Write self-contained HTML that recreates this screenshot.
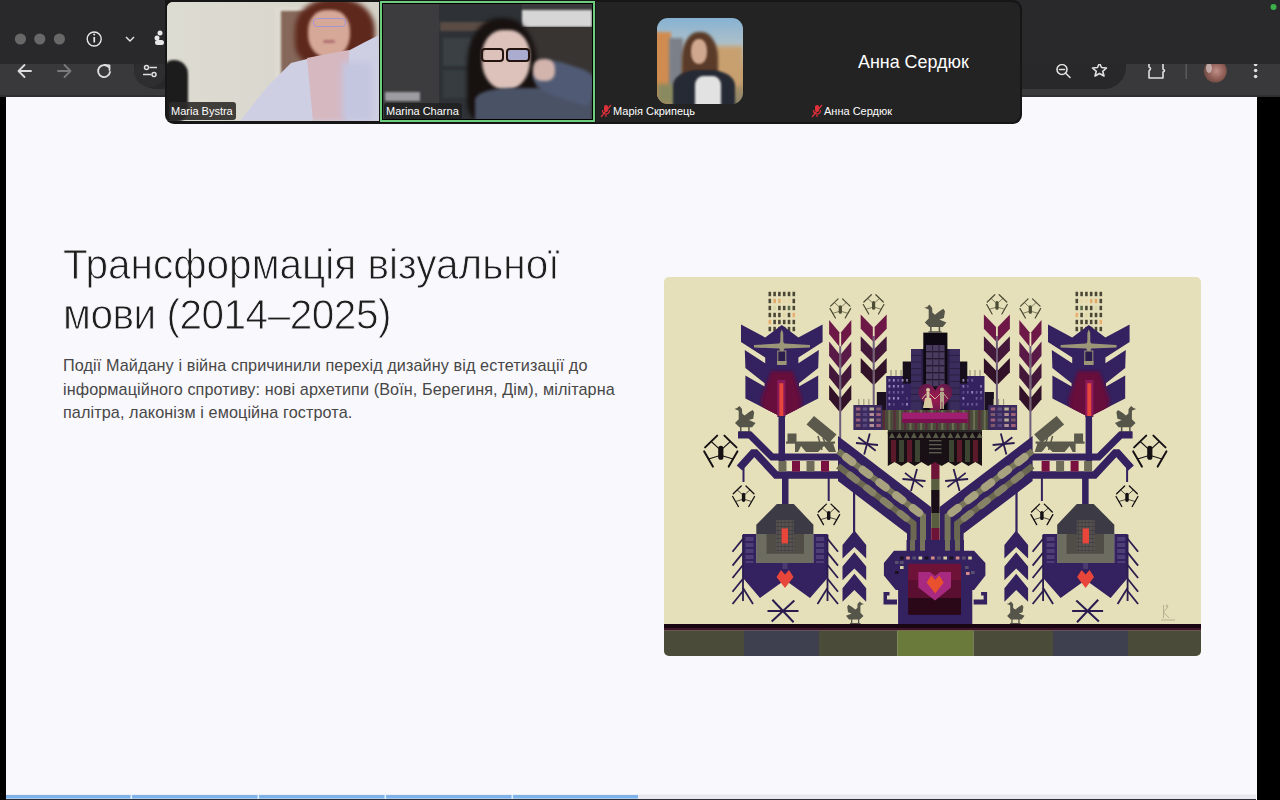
<!DOCTYPE html>
<html><head><meta charset="utf-8">
<style>
*{margin:0;padding:0;box-sizing:border-box}
html,body{width:1280px;height:800px;overflow:hidden;background:#000;font-family:"Liberation Sans",sans-serif}
.abs{position:absolute}
#toolbar{left:0;top:63px;width:1280px;height:34px;background:linear-gradient(180deg,#39393b 0,#39393b 31.5px,#2f2f31 32px);z-index:1}
#omni{left:134px;top:40px;width:992px;height:49px;background:#28282a;border-radius:0 0 22px 22px;z-index:2}
#tabbar{left:0;top:0;width:1280px;height:63.6px;background:#29292b;z-index:3}
#page{left:6px;top:96.6px;width:1251px;height:703px;background:#f9f8fc;z-index:1}
#title{left:63px;top:239.5px;font-size:42px;line-height:50px;color:#1e1e1e;z-index:2;white-space:nowrap;transform:scaleX(0.965);-webkit-text-stroke:0.9px #f9f8fc;transform-origin:0 0}
#body{left:63px;top:354px;font-size:16.2px;line-height:23.5px;color:#474747;z-index:2;white-space:nowrap;letter-spacing:0.1px}
#zoom{left:165px;top:0;width:857px;height:124px;background:#161616;border-radius:0 9px 9px 9px;z-index:10;overflow:hidden}
.tile{position:absolute;overflow:hidden}
.lbl{position:absolute;background:rgba(46,44,42,.9);color:#fff;font-size:11px;line-height:17px;padding:0 3px 0 2px;border-radius:3px;white-space:nowrap}
.blob{position:absolute}
#art{left:664px;top:277px;width:537px;height:379px;z-index:2}
#prog{left:6px;top:795px;width:1250px;height:5px;z-index:3}
</style></head><body>
<div id="toolbar" class="abs"></div>
<div id="omni" class="abs"></div>
<div id="tabbar" class="abs"></div>
<svg class="abs" style="left:0;top:0;z-index:4" width="1280" height="97" viewBox="0 0 1280 97">
  <circle cx="20.4" cy="39" r="5.6" fill="#686868"/>
  <circle cx="39.8" cy="39" r="5.6" fill="#686868"/>
  <circle cx="59.4" cy="39" r="5.6" fill="#686868"/>
  <circle cx="94.2" cy="39" r="7" fill="none" stroke="#e8e8e8" stroke-width="1.4"/>
  <rect x="93.4" y="37" width="1.7" height="5.5" fill="#e8e8e8"/><circle cx="94.2" cy="34.6" r="1" fill="#e8e8e8"/>
  <polyline points="126,37 130,41 134,37" fill="none" stroke="#e8e8e8" stroke-width="1.4"/>
  <circle cx="160" cy="33" r="2.5" fill="#e8e8e8"/><circle cx="157" cy="38" r="2.5" fill="#e8e8e8"/><rect x="155" y="40" width="9" height="5" rx="2.5" fill="#e8e8e8"/>
  <circle cx="1273.5" cy="7" r="3" fill="#3cb04a"/>
</svg>
<svg class="abs" style="left:0;top:63px;z-index:2" width="1280" height="34" viewBox="0 63 1280 34">
  <g fill="none" stroke="#dcdcdc" stroke-width="1.8" stroke-linecap="round" stroke-linejoin="round">
    <polyline points="24.5,65 18.5,71 24.5,77"/><line x1="19" y1="71" x2="31" y2="71"/>
  </g>
  <g fill="none" stroke="#7a7a7a" stroke-width="1.8" stroke-linecap="round" stroke-linejoin="round">
    <polyline points="64.5,65 70.5,71 64.5,77"/><line x1="58" y1="71" x2="70" y2="71"/>
  </g>
  <g fill="none" stroke="#dcdcdc" stroke-width="1.8" stroke-linecap="round">
    <path d="M108.5,67 A6,6 0 1 0 110,72"/><polyline points="104.5,65 109.5,65.5 109.5,70" stroke-linejoin="round"/>
  </g>
  <circle cx="150" cy="71" r="16" fill="#2e2e30"/>
  <g fill="none" stroke="#e0e0e0" stroke-width="1.5"><circle cx="146.5" cy="67.5" r="2"/><line x1="149.5" y1="67.5" x2="157" y2="67.5"/><circle cx="154" cy="74.5" r="2"/><line x1="143" y1="74.5" x2="151" y2="74.5"/></g>
  <g fill="none" stroke="#e0e0e0" stroke-width="1.6" stroke-linecap="round">
    <circle cx="1062" cy="69.5" r="5"/><line x1="1065.5" y1="73" x2="1070" y2="77.5"/><line x1="1059.5" y1="69.5" x2="1064.5" y2="69.5"/>
    <path d="M1099.5,63 L1101.5,67.5 L1106.5,68 L1102.7,71.3 L1104,76 L1099.5,73.5 L1095,76 L1096.3,71.3 L1092.5,68 L1097.5,67.5 Z" stroke-linejoin="round"/>
    <path d="M1149,63 L1149,67 Q1152,68 1149,71 L1149,78 L1163,78 L1163,72 Q1166,71 1163,69 L1163,63" stroke-linejoin="round"/>
  </g>
  <rect x="1185.5" y="64" width="1.5" height="15" fill="#5a5a5c"/>
  <defs><radialGradient id="avg" cx="0.55" cy="0.5" r="0.55"><stop offset="0" stop-color="#c09088"/><stop offset="0.7" stop-color="#8a5a52"/><stop offset="1" stop-color="#6a4a44"/></radialGradient></defs><circle cx="1215.3" cy="71" r="11.5" fill="url(#avg)"/><ellipse cx="1209" cy="68" rx="3" ry="5" fill="#d8c8c8" opacity="0.7"/>
  <circle cx="1255.6" cy="64.5" r="1.8" fill="#e0e0e0"/><circle cx="1255.6" cy="70.5" r="1.8" fill="#e0e0e0"/><circle cx="1255.6" cy="76.5" r="1.8" fill="#e0e0e0"/>
</svg>
<div id="page" class="abs"></div>
<div id="title" class="abs">Трансформація візуальної<br><span style="letter-spacing:-0.5px">мови (2014–2025)</span></div>
<div id="body" class="abs">Події Майдану і війна спричинили перехід дизайну від естетизації до<br>інформаційного спротиву: нові архетипи (Воїн, Берегиня, Дім), мілітарна<br>палітра, лаконізм і емоційна гострота.</div>

<div id="zoom" class="abs">
  <!-- tile 1 -->
  <div class="tile" style="left:2px;top:2px;width:212px;height:119px;background:#d9d7cd;border-radius:6px 0 0 0">
    <div class="blob" style="left:0;top:0;width:212px;height:119px;background:linear-gradient(90deg,#dddcd2,#dad8ce 50%,#d4d1c6)"></div>
    <div class="blob" style="left:108px;top:5px;width:32px;height:84px;background:#dedad2"></div>
    <div class="blob" style="left:114px;top:9px;width:26px;height:80px;background:#86685a;filter:blur(.8px)"></div>
    <div class="blob" style="left:-4px;top:58px;width:25px;height:62px;background:#1c1c1c;border-radius:10px 14px 12px 4px;filter:blur(1px)"></div>
    <div class="blob" style="left:128px;top:-4px;width:80px;height:70px;background:#5e281c;border-radius:45% 45% 35% 35%;filter:blur(2.5px)"></div>
    <div class="blob" style="left:141px;top:8px;width:42px;height:48px;background:#d6a898;border-radius:42% 42% 48% 48%;filter:blur(1.5px)"></div>
    <div class="blob" style="left:146px;top:16px;width:33px;height:9px;border:1.5px solid #a494d4;border-radius:4px;filter:blur(.4px)"></div>
    <div class="blob" style="left:156px;top:38px;width:12px;height:3px;background:#b07070;border-radius:2px;filter:blur(.8px)"></div>
    <div class="blob" style="left:0;top:0;width:212px;height:119px;background:#cfcfe4;clip-path:polygon(73px 119px,100px 85px,124px 61px,144px 56px,181px 49px,198px 40px,212px 33px,212px 119px);filter:blur(1px)"></div>
    <div class="blob" style="left:0;top:0;width:212px;height:119px;background:#d6b8c0;clip-path:polygon(140px 56px,160px 52px,182px 48px,180px 119px,146px 119px);filter:blur(2px)"></div>
    <div class="blob" style="left:175px;top:60px;width:30px;height:59px;background:#c4c6e0;filter:blur(3px)"></div>
    <div class="lbl" style="left:2px;top:100px;height:18px;line-height:18px">Maria Bystra</div>
  </div>
  <!-- tile 2 -->
  <div class="tile" style="left:215px;top:1px;width:215px;height:121px;border:2px solid #6cce7c;background:#000">
    <div class="tile" style="left:1px;top:1px;width:209px;height:115px;background:#3a3a3c">
      <div class="blob" style="left:0;top:0;width:56px;height:115px;background:#3c3b3d"></div>
      <div class="blob" style="left:56px;top:0;width:83px;height:115px;background:#2e3236"></div>
      <div class="blob" style="left:57px;top:18px;width:60px;height:9px;background:#5a4c44;filter:blur(1px)"></div>
      <div class="blob" style="left:60px;top:34px;width:28px;height:28px;background:#3a4044;filter:blur(1px)"></div>
      <div class="blob" style="left:60px;top:66px;width:28px;height:28px;background:#363c40;filter:blur(1px)"></div>
      <div class="blob" style="left:139px;top:6px;width:70px;height:17px;background:#d6d6d6;filter:blur(1px)"></div>
      <div class="blob" style="left:139px;top:23px;width:70px;height:92px;background:#383432"></div>
      <div class="blob" style="left:2px;top:88px;width:35px;height:9px;background:#9c9ca2;filter:blur(.8px)"></div>
      <div class="blob" style="left:84px;top:14px;width:70px;height:104px;background:#171110;border-radius:45% 45% 20% 20%;filter:blur(2px)"></div>
      <div class="blob" style="left:99px;top:26px;width:48px;height:60px;background:#dcc2ba;border-radius:42% 42% 48% 48%;filter:blur(1.5px)"></div>
      <div class="blob" style="left:98px;top:44px;width:23px;height:14px;border:2.2px solid #241410;border-radius:4px"></div>
      <div class="blob" style="left:123px;top:44px;width:24px;height:14px;border:2.2px solid #241410;border-radius:4px;background:rgba(120,150,230,.5)"></div>
      <div class="blob" style="left:92px;top:84px;width:117px;height:40px;background:#4a5266;border-radius:30% 20% 0 0;filter:blur(1.5px)"></div>
      <div class="blob" style="left:150px;top:60px;width:62px;height:34px;background:#505a74;border-radius:40% 30% 10% 40%;transform:rotate(18deg);filter:blur(1.5px)"></div>
      <div class="blob" style="left:150px;top:55px;width:22px;height:22px;background:#d2b4ac;border-radius:40%;filter:blur(1.5px)"></div>
      <div class="lbl" style="left:1px;top:99px;height:17px;line-height:17px;background:rgba(30,30,30,.75)">Marina Charna</div>
    </div>
  </div>
  <!-- tile 3 -->
  <div class="tile" style="left:431px;top:2px;width:213px;height:120px;background:#232323">
    <div class="blob" style="left:61px;top:16px;width:86px;height:86px;border-radius:11px;overflow:hidden;background:linear-gradient(180deg,#86b2d2 0%,#b8c4c8 38%,#c09868 62%,#8a8468 100%)">
      <div class="blob" style="left:-2px;top:14px;width:16px;height:72px;background:#d08c50;filter:blur(1.5px)"></div>
      <div class="blob" style="left:12px;top:20px;width:14px;height:60px;background:#7c8088;filter:blur(1.5px)"></div>
      <div class="blob" style="left:56px;top:28px;width:30px;height:40px;background:#c8a070;filter:blur(2px)"></div>
      <div class="blob" style="left:0;top:66px;width:20px;height:20px;background:#8a8a60;filter:blur(2px)"></div>
      <div class="blob" style="left:25px;top:14px;width:36px;height:58px;background:#5a3a28;border-radius:45% 45% 25% 25%;filter:blur(1.5px)"></div>
      <div class="blob" style="left:34px;top:21px;width:16px;height:25px;background:#d0a890;border-radius:45%;filter:blur(1px)"></div>
      <div class="blob" style="left:16px;top:52px;width:62px;height:38px;background:#262a34;border-radius:40% 40% 0 0;filter:blur(1px)"></div>
      <div class="blob" style="left:38px;top:58px;width:26px;height:30px;background:#e2e2e2;border-radius:30% 30% 0 0;filter:blur(1px)"></div>
    </div>
    <svg class="blob" style="left:4px;top:102px" width="12" height="14" viewBox="0 0 12 14"><rect x="4" y="1" width="4" height="7" rx="2" fill="#e0303a"/><path d="M2.5,6 Q2.5,10 6,10 Q9.5,10 9.5,6" fill="none" stroke="#e0303a" stroke-width="1.2"/><line x1="6" y1="10" x2="6" y2="13" stroke="#e0303a" stroke-width="1.2"/><line x1="1" y1="13" x2="11" y2="1" stroke="#e0303a" stroke-width="1.2"/></svg>
    <div class="lbl" style="left:15px;top:101px;height:17px;line-height:17px;background:transparent">Марія Скрипець</div>
  </div>
  <!-- tile 4 -->
  <div class="tile" style="left:643px;top:2px;width:212px;height:120px;background:#232323;border-radius:0 8px 8px 0">
    <div class="blob" style="left:50px;top:50px;font-size:17.9px;color:#fff;white-space:nowrap">Анна Сердюк</div>
    <svg class="blob" style="left:3px;top:102px" width="12" height="14" viewBox="0 0 12 14"><rect x="4" y="1" width="4" height="7" rx="2" fill="#e0303a"/><path d="M2.5,6 Q2.5,10 6,10 Q9.5,10 9.5,6" fill="none" stroke="#e0303a" stroke-width="1.2"/><line x1="6" y1="10" x2="6" y2="13" stroke="#e0303a" stroke-width="1.2"/><line x1="1" y1="13" x2="11" y2="1" stroke="#e0303a" stroke-width="1.2"/></svg>
    <div class="lbl" style="left:14px;top:101px;height:17px;line-height:17px;background:transparent">Анна Сердюк</div>
  </div>
</div>

<svg id="art" class="abs" viewBox="664 277 537 379">
<defs><clipPath id="artclip"><rect x="664" y="277" width="537" height="379" rx="5"/></clipPath></defs>
<g clip-path="url(#artclip)">
<rect x="664" y="277" width="537" height="379" fill="#e6e0ba"/>
<g id="L"><rect x="768.5" y="291.8" width="2.6" height="4.4" fill="#4a4636" /><rect x="773.3" y="291.8" width="2.6" height="4.4" fill="#4a4636" /><rect x="778.1" y="291.8" width="2.6" height="4.4" fill="#4a4636" /><rect x="782.9" y="291.8" width="2.6" height="4.4" fill="#4a4636" /><rect x="787.7" y="291.8" width="2.6" height="4.4" fill="#4a4636" /><rect x="792.5" y="291.8" width="2.6" height="4.4" fill="#4a4636" /><rect x="768.5" y="298.8" width="2.6" height="4.4" fill="#4a4636" /><rect x="773.3" y="298.8" width="2.6" height="4.4" fill="#e0a868" /><rect x="778.1" y="298.8" width="2.6" height="4.4" fill="#e0b070" /><rect x="782.9" y="298.8" width="2.6" height="4.4" fill="#e6d8a8" /><rect x="787.7" y="298.8" width="2.6" height="4.4" fill="#e6d8a8" /><rect x="792.5" y="298.8" width="2.6" height="4.4" fill="#4a4636" /><rect x="768.5" y="305.8" width="2.6" height="4.4" fill="#4a4636" /><rect x="773.3" y="305.8" width="2.6" height="4.4" fill="#d8d4a8" /><rect x="778.1" y="305.8" width="2.6" height="4.4" fill="#4a4636" /><rect x="782.9" y="305.8" width="2.6" height="4.4" fill="#4a4636" /><rect x="787.7" y="305.8" width="2.6" height="4.4" fill="#5a6a48" /><rect x="792.5" y="305.8" width="2.6" height="4.4" fill="#4a4636" /><rect x="768.5" y="312.8" width="2.6" height="4.4" fill="#4a4636" /><rect x="773.3" y="312.8" width="2.6" height="4.4" fill="#4a4636" /><rect x="778.1" y="312.8" width="2.6" height="4.4" fill="#4a4636" /><rect x="782.9" y="312.8" width="2.6" height="4.4" fill="#e0d8a8" /><rect x="787.7" y="312.8" width="2.6" height="4.4" fill="#4a4636" /><rect x="792.5" y="312.8" width="2.6" height="4.4" fill="#e8b070" /><rect x="768.5" y="319.8" width="2.6" height="4.4" fill="#e8b070" /><rect x="773.3" y="319.8" width="2.6" height="4.4" fill="#4a4636" /><rect x="778.1" y="319.8" width="2.6" height="4.4" fill="#4a4636" /><rect x="782.9" y="319.8" width="2.6" height="4.4" fill="#4a4636" /><rect x="787.7" y="319.8" width="2.6" height="4.4" fill="#4a4636" /><rect x="792.5" y="319.8" width="2.6" height="4.4" fill="#4a4636" /><rect x="768.5" y="326.8" width="2.6" height="4.4" fill="#4a4636" /><rect x="773.3" y="326.8" width="2.6" height="4.4" fill="#4a4636" /><rect x="778.1" y="326.8" width="2.6" height="4.4" fill="#4a4636" /><rect x="782.9" y="326.8" width="2.6" height="4.4" fill="#4a4636" /><rect x="787.7" y="326.8" width="2.6" height="4.4" fill="#4a4636" /><rect x="792.5" y="326.8" width="2.6" height="4.4" fill="#4a4636" /><polygon points="741.0,324.6 765.2,337.5 781.8,325.0 798.4,337.5 822.6,324.6 822.6,341.9 798.4,357.5 798.4,363.2 818.8,350.0 818.2,368.1 799.0,383.2 799.0,386.6 818.2,375.6 818.2,398.5 781.8,417.0 745.4,398.5 745.4,375.6 764.6,386.6 764.6,383.2 745.4,368.1 744.8,350.0 765.2,363.2 765.2,357.5 741.0,341.9" fill="#33225f" /><defs><clipPath id="shclip"><polygon points="741.0,324.6 765.2,337.5 781.8,325.0 798.4,337.5 822.6,324.6 822.6,341.9 798.4,357.5 798.4,363.2 818.8,350.0 818.2,368.1 799.0,383.2 799.0,386.6 818.2,375.6 818.2,398.5 781.8,417.0 745.4,398.5 745.4,375.6 764.6,386.6 764.6,383.2 745.4,368.1 744.8,350.0 765.2,363.2 765.2,357.5 741.0,341.9"/></clipPath><filter id="mblur" x="-0.3" y="-0.3" width="1.6" height="1.6"><feGaussianBlur stdDeviation="1.8"/></filter></defs><g clip-path="url(#shclip)"><polygon points="771.0,371.0 793.0,371.0 802.0,398.0 802.0,420.0 761.0,420.0 761.0,398.0" fill="#5e1040" filter="url(#mblur)"/><polygon points="773.0,373.0 791.0,373.0 798.0,398.0 798.0,420.0 765.0,420.0 765.0,398.0" fill="#680e3c" /></g><rect x="777.2" y="380.0" width="8.2" height="37.0" fill="#8a1a5a" /><rect x="779.4" y="383.2" width="3.9" height="34.0" fill="#e8463a" /><polygon points="754.0,345.0 779.0,343.5 781.8,341.0 784.6,343.5 810.0,345.0 810.0,347.5 784.6,348.5 781.8,352.0 779.0,348.5 754.0,347.5" fill="#9c9678" /><polygon points="780.4,333.0 781.8,329.2 783.2,333.0 783.4,352.0 780.2,352.0" fill="#9c9678" /><rect x="777.8" y="351" width="8" height="11" fill="#2a1c4c" stroke="#9c9678" stroke-width="1"/><rect x="777.0" y="361.0" width="9.6" height="4.0" fill="#9c9678" /><rect x="839.2" y="346.0" width="2.0" height="110.0" fill="#6e5e7a" /><polygon points="829.1,319.9 839.3,332.3 839.3,346.5 829.1,334.1" fill="#6e1848" /><polygon points="851.3,319.9 841.1,332.3 841.1,346.5 851.3,334.1" fill="#6e1848" /><polygon points="829.1,341.6 839.3,354.0 839.3,368.2 829.1,355.8" fill="#5a1a48" /><polygon points="851.3,341.6 841.1,354.0 841.1,368.2 851.3,355.8" fill="#5a1a48" /><polygon points="829.1,363.3 839.3,375.7 839.3,389.9 829.1,377.5" fill="#42173a" /><polygon points="851.3,363.3 841.1,375.7 841.1,389.9 851.3,377.5" fill="#42173a" /><polygon points="829.1,385.0 839.3,397.4 839.3,411.6 829.1,399.2" fill="#321228" /><polygon points="851.3,385.0 841.1,397.4 841.1,411.6 851.3,399.2" fill="#321228" /><rect x="872.7" y="336.0" width="2.0" height="74.0" fill="#6e5e7a" /><polygon points="860.7,314.6 872.8,327.0 872.8,341.2 860.7,328.8" fill="#6e1848" /><polygon points="886.7,314.6 874.6,327.0 874.6,341.2 886.7,328.8" fill="#6e1848" /><polygon points="860.7,336.3 872.8,348.7 872.8,362.9 860.7,350.5" fill="#42173a" /><polygon points="886.7,336.3 874.6,348.7 874.6,362.9 886.7,350.5" fill="#42173a" /><polygon points="860.7,358.0 872.8,370.4 872.8,384.6 860.7,372.2" fill="#321228" /><polygon points="886.7,358.0 874.6,370.4 874.6,384.6 886.7,372.2" fill="#321228" /><g transform="translate(720.8,452.8) scale(1.0)" stroke="#141014" fill="none" stroke-linecap="round"><path d="M-1.5,-4 L-9.6,-11.3 M1.5,-4 L9.6,-11.3 M-1.5,3 L-12.2,6.2 M1.5,3 L12.2,6.2" stroke-width="1.1"/><path d="M-15.7,-5.4 L-3.6,-17.2 M15.7,-5.4 L3.6,-17.2 M-16.6,-1.4 L-7.9,13.8 M16.6,-1.4 L7.9,13.8" stroke-width="2"/><rect x="-2.6" y="-7" width="5.2" height="14" rx="2.6" fill="#141014" stroke="none"/></g><g transform="translate(743.6,497.4) scale(0.66)" stroke="#141014" fill="none" stroke-linecap="round"><path d="M-1.5,-4 L-9.6,-11.3 M1.5,-4 L9.6,-11.3 M-1.5,3 L-12.2,6.2 M1.5,3 L12.2,6.2" stroke-width="1.1"/><path d="M-15.7,-5.4 L-3.6,-17.2 M15.7,-5.4 L3.6,-17.2 M-16.6,-1.4 L-7.9,13.8 M16.6,-1.4 L7.9,13.8" stroke-width="2"/><rect x="-2.6" y="-7" width="5.2" height="14" rx="2.6" fill="#141014" stroke="none"/></g><g transform="translate(828.7,515.5) scale(0.66)" stroke="#141014" fill="none" stroke-linecap="round"><path d="M-1.5,-4 L-9.6,-11.3 M1.5,-4 L9.6,-11.3 M-1.5,3 L-12.2,6.2 M1.5,3 L12.2,6.2" stroke-width="1.1"/><path d="M-15.7,-5.4 L-3.6,-17.2 M15.7,-5.4 L3.6,-17.2 M-16.6,-1.4 L-7.9,13.8 M16.6,-1.4 L7.9,13.8" stroke-width="2"/><rect x="-2.6" y="-7" width="5.2" height="14" rx="2.6" fill="#141014" stroke="none"/></g><g transform="translate(840.3,309.5) scale(0.62)" stroke="#4c4c34" fill="none" stroke-linecap="round"><path d="M-1.5,-4 L-9.6,-11.3 M1.5,-4 L9.6,-11.3 M-1.5,3 L-12.2,6.2 M1.5,3 L12.2,6.2" stroke-width="1.1"/><path d="M-15.7,-5.4 L-3.6,-17.2 M15.7,-5.4 L3.6,-17.2 M-16.6,-1.4 L-7.9,13.8 M16.6,-1.4 L7.9,13.8" stroke-width="2"/><rect x="-2.6" y="-7" width="5.2" height="14" rx="2.6" fill="#4c4c34" stroke="none"/></g><g transform="translate(873.6,305.4) scale(0.62)" stroke="#4c4c34" fill="none" stroke-linecap="round"><path d="M-1.5,-4 L-9.6,-11.3 M1.5,-4 L9.6,-11.3 M-1.5,3 L-12.2,6.2 M1.5,3 L12.2,6.2" stroke-width="1.1"/><path d="M-15.7,-5.4 L-3.6,-17.2 M15.7,-5.4 L3.6,-17.2 M-16.6,-1.4 L-7.9,13.8 M16.6,-1.4 L7.9,13.8" stroke-width="2"/><rect x="-2.6" y="-7" width="5.2" height="14" rx="2.6" fill="#4c4c34" stroke="none"/></g><polygon points="734.4,408.9 737.1,408.1 739.5,405.9 742.0,409.1 742.2,413.5 744.6,415.6 748.9,412.3 752.6,409.9 754.2,412.3 753.2,418.7 748.9,420.0 755.6,422.9 752.1,427.3 739.3,427.3 735.0,423.1 738.7,419.3 738.7,410.7 736.5,409.7" fill="#56554a" /><g transform="translate(745,432.5) scale(1.0,1.0)" fill="#56554a"><rect x="-5" y="-6" width="1.5" height="5.5"/><rect x="3.2" y="-6" width="1.5" height="5.5"/><rect x="-6.5" y="-1.2" width="12.5" height="1.2"/></g><polygon points="864.0,603.9 861.7,603.3 859.7,601.4 857.5,604.1 857.4,607.9 855.3,609.6 851.7,606.8 848.5,604.8 847.2,606.8 848.0,612.3 851.7,613.4 846.0,615.8 849.0,619.6 859.8,619.6 863.5,616.0 860.4,612.8 860.4,605.5 862.2,604.6" fill="#56554a" /><g transform="translate(855,624) scale(-0.85,0.85)" fill="#56554a"><rect x="-5" y="-6" width="1.5" height="5.5"/><rect x="3.2" y="-6" width="1.5" height="5.5"/><rect x="-6.5" y="-1.2" width="12.5" height="1.2"/></g><polyline points="738,435 750,435 772,457 840,457" fill="none" stroke="#33225f" stroke-width="7" stroke-linejoin="miter"/><polyline points="739.5,468 753,453 755.5,453 776,475 840,475" fill="none" stroke="#33225f" stroke-width="7.5" stroke-linejoin="miter"/><rect x="742.5" y="468.0" width="2.0" height="14.0" fill="#33225f" /><rect x="778.5" y="416.0" width="6.5" height="45.0" fill="#33225f" /><rect x="782.0" y="475.0" width="6.5" height="30.0" fill="#33225f" /><rect x="827.7" y="475.0" width="2.0" height="26.0" fill="#33225f" /><rect x="853.0" y="478.0" width="2.2" height="54.0" fill="#33225f" /><rect x="778.5" y="461.0" width="8.0" height="10.5" fill="#6e6c58" /><rect x="792.0" y="461.0" width="8.0" height="10.5" fill="#7a1040" /><rect x="806.5" y="461.0" width="8.0" height="10.5" fill="#6e6c58" /><rect x="821.0" y="461.0" width="8.0" height="10.5" fill="#7a1040" /><rect x="787.5" y="433.5" width="9.0" height="9.0" fill="#5a594c" /><rect x="786.0" y="441.5" width="49.0" height="2.2" fill="#5a594c" /><polygon points="795.0,443.0 833.0,443.0 836.0,452.0 829.0,452.0 824.0,446.0 818.0,452.0 806.0,452.0 801.0,446.0 798.0,452.0 795.0,452.0" fill="#5a594c" /><polygon points="806.5,424.5 814.0,416.0 836.5,434.5 829.0,443.0" fill="#5a594c" /><path d="M818,436 L822,450 M823,438 L828,450" stroke="#5a594c" stroke-width="1.5"/><polygon points="838.0,436.0 931.0,507.0 931.0,551.0 907.0,551.0 907.0,533.6 838.0,481.0" fill="#33225f" /><polyline points="838,466 913.5,523.6 913.5,551" fill="none" stroke="#6a6850" stroke-width="6" stroke-linejoin="miter"/><polyline points="838,451 923,515.9 923,551" fill="none" stroke="#77755a" stroke-width="6" stroke-linejoin="miter"/><polyline points="846,457.1 921,514.3" fill="none" stroke="#a8a27e" stroke-width="8" stroke-dasharray="8 13" stroke-linecap="round"/><polyline points="842,469 910,521" fill="none" stroke="#868266" stroke-width="7" stroke-dasharray="8 13" stroke-dashoffset="-10" stroke-linecap="round"/><line x1="864.2" y1="454.6" x2="869.8" y2="433.4" stroke="#2a1c4e" stroke-width="1.8"/><line x1="856.0" y1="443.0" x2="878.0" y2="445.0" stroke="#2a1c4e" stroke-width="1.8"/><line x1="858.3" y1="437.2" x2="875.7" y2="450.8" stroke="#2a1c4e" stroke-width="1.8"/><line x1="911.0" y1="491.1" x2="917.0" y2="468.9" stroke="#2a1c4e" stroke-width="1.8"/><line x1="902.5" y1="479.0" x2="925.5" y2="481.0" stroke="#2a1c4e" stroke-width="1.8"/><line x1="904.9" y1="472.9" x2="923.1" y2="487.1" stroke="#2a1c4e" stroke-width="1.8"/><line x1="767.5" y1="611.0" x2="798.5" y2="611.0" stroke="#2a1c4e" stroke-width="2"/><line x1="771.7" y1="621.6" x2="794.3" y2="600.4" stroke="#2a1c4e" stroke-width="2"/><line x1="772.4" y1="599.7" x2="793.6" y2="622.3" stroke="#2a1c4e" stroke-width="2"/><polygon points="776.9,504.0 793.8,504.0 813.4,524.7 813.4,534.0 756.3,534.0 756.3,524.7" fill="#3c3a44" /><rect x="756.3" y="534.0" width="57.1" height="29.0" fill="#6d6c60" /><rect x="766.6" y="534.0" width="37.4" height="19.8" fill="#4f4d46" /><rect x="776.0" y="520.0" width="17.8" height="32.0" fill="#5a5852" opacity="0.8"/><rect x="776.0" y="522.0" width="17.8" height="1.0" fill="#3a3840" opacity="0.6"/><rect x="776.0" y="526.0" width="17.8" height="1.0" fill="#3a3840" opacity="0.6"/><rect x="776.0" y="530.0" width="17.8" height="1.0" fill="#3a3840" opacity="0.6"/><rect x="776.0" y="534.0" width="17.8" height="1.0" fill="#3a3840" opacity="0.6"/><rect x="776.0" y="538.0" width="17.8" height="1.0" fill="#3a3840" opacity="0.6"/><rect x="776.0" y="542.0" width="17.8" height="1.0" fill="#3a3840" opacity="0.6"/><rect x="776.0" y="546.0" width="17.8" height="1.0" fill="#3a3840" opacity="0.6"/><rect x="776.0" y="550.0" width="17.8" height="1.0" fill="#3a3840" opacity="0.6"/><rect x="777.5" y="520.0" width="0.8" height="32.0" fill="#3a3840" opacity="0.5"/><rect x="781.1" y="520.0" width="0.8" height="32.0" fill="#3a3840" opacity="0.5"/><rect x="784.7" y="520.0" width="0.8" height="32.0" fill="#3a3840" opacity="0.5"/><rect x="788.3" y="520.0" width="0.8" height="32.0" fill="#3a3840" opacity="0.5"/><rect x="791.9" y="520.0" width="0.8" height="32.0" fill="#3a3840" opacity="0.5"/><rect x="781.6" y="528.4" width="6.4" height="15.0" fill="#e8463a" /><rect x="743.0" y="534.0" width="13.3" height="44.0" fill="#33225f" /><rect x="813.4" y="534.0" width="14.1" height="44.0" fill="#33225f" /><rect x="745.5" y="537.0" width="8.0" height="4.0" fill="#5a4a80" opacity="0.7"/><rect x="816.0" y="537.0" width="8.0" height="4.0" fill="#5a4a80" opacity="0.7"/><rect x="745.5" y="543.0" width="8.0" height="4.0" fill="#5a4a80" opacity="0.7"/><rect x="816.0" y="543.0" width="8.0" height="4.0" fill="#5a4a80" opacity="0.7"/><rect x="745.5" y="549.0" width="8.0" height="4.0" fill="#5a4a80" opacity="0.7"/><rect x="816.0" y="549.0" width="8.0" height="4.0" fill="#5a4a80" opacity="0.7"/><rect x="745.5" y="555.0" width="8.0" height="4.0" fill="#5a4a80" opacity="0.7"/><rect x="816.0" y="555.0" width="8.0" height="4.0" fill="#5a4a80" opacity="0.7"/><rect x="745.5" y="561.0" width="8.0" height="4.0" fill="#5a4a80" opacity="0.7"/><rect x="816.0" y="561.0" width="8.0" height="4.0" fill="#5a4a80" opacity="0.7"/><rect x="745.5" y="567.0" width="8.0" height="4.0" fill="#5a4a80" opacity="0.7"/><rect x="816.0" y="567.0" width="8.0" height="4.0" fill="#5a4a80" opacity="0.7"/><polygon points="743.0,563.0 827.5,563.0 827.5,578.0 810.0,598.0 785.0,580.0 760.0,598.0 743.0,578.0" fill="#33225f" /><rect x="782.5" y="563.0" width="5.0" height="6.0" fill="#4a3a70" /><path transform="translate(785,578.5) scale(1.0)" d="M0,9.5 L-8.5,-1.5 L-4,-8.5 L0,-4 L4,-8.5 L8.5,-1.5 Z" fill="#e8463a"/><line x1="743" y1="534.7" x2="743" y2="601" stroke="#2a1c4e" stroke-width="1.8"/><line x1="743" y1="538.8" x2="732.5" y2="551.8" stroke="#2a1c4e" stroke-width="1.8"/><line x1="743" y1="552.6" x2="732.5" y2="565.6" stroke="#2a1c4e" stroke-width="1.8"/><line x1="743" y1="565" x2="732.5" y2="578" stroke="#2a1c4e" stroke-width="1.8"/><line x1="743" y1="578.7" x2="732.5" y2="591.7" stroke="#2a1c4e" stroke-width="1.8"/><line x1="743" y1="591" x2="732.5" y2="604" stroke="#2a1c4e" stroke-width="1.8"/><line x1="743" y1="588" x2="753" y2="604" stroke="#2a1c4e" stroke-width="1.8"/><line x1="827.5" y1="534.7" x2="827.5" y2="601" stroke="#2a1c4e" stroke-width="1.8"/><line x1="827.5" y1="538.8" x2="838.0" y2="551.8" stroke="#2a1c4e" stroke-width="1.8"/><line x1="827.5" y1="552.6" x2="838.0" y2="565.6" stroke="#2a1c4e" stroke-width="1.8"/><line x1="827.5" y1="565" x2="838.0" y2="578" stroke="#2a1c4e" stroke-width="1.8"/><line x1="827.5" y1="578.7" x2="838.0" y2="591.7" stroke="#2a1c4e" stroke-width="1.8"/><line x1="827.5" y1="591" x2="838.0" y2="604" stroke="#2a1c4e" stroke-width="1.8"/><line x1="827.5" y1="588" x2="817.5" y2="604" stroke="#2a1c4e" stroke-width="1.8"/><polygon points="854.4,530.6 866.2,545.0 866.2,558.6 854.4,546.9 842.5,558.6 842.5,545.0" fill="#33225f" /><polygon points="854.4,552.2 866.2,566.6 866.2,580.2 854.4,568.5 842.5,580.2 842.5,566.6" fill="#33225f" /><polygon points="854.4,573.8 866.2,588.2 866.2,601.8 854.4,590.1 842.5,601.8 842.5,588.2" fill="#33225f" /></g>
<use href="#L" transform="translate(1870.6,0) scale(-1,1)"/>
<polygon points="924.2,307.7 927.0,306.9 929.5,304.6 932.1,307.9 932.4,312.6 934.9,314.8 939.4,311.3 943.3,308.8 945.0,311.3 943.9,318.0 939.4,319.4 946.4,322.4 942.8,327.0 929.3,327.0 924.8,322.6 928.7,318.6 928.7,309.6 926.4,308.6" fill="#56554a" /><g transform="translate(935.3,332.5) scale(1.05,1.05)" fill="#56554a"><rect x="-5" y="-6" width="1.5" height="5.5"/><rect x="3.2" y="-6" width="1.5" height="5.5"/><rect x="-6.5" y="-1.2" width="12.5" height="1.2"/></g><rect x="931.2" y="454.0" width="8.3" height="25.0" fill="#6e1438" /><rect x="931.2" y="479.0" width="8.3" height="11.0" fill="#5a5e40" /><rect x="931.2" y="490.0" width="8.3" height="23.0" fill="#1a0e18" /><rect x="931.2" y="513.0" width="8.3" height="15.0" fill="#5a5e40" /><rect x="931.2" y="528.0" width="8.3" height="23.0" fill="#6e1438" /><rect x="886.2" y="376.0" width="98.3" height="34.0" fill="#33225f" /><rect x="876.8" y="392.0" width="9.4" height="38.0" fill="#1a1020" /><rect x="984.5" y="392.0" width="9.4" height="38.0" fill="#1a1020" /><rect x="902.7" y="361.5" width="8.3" height="22.0" fill="#160e1a" /><rect x="959.8" y="361.5" width="7.5" height="22.0" fill="#160e1a" /><rect x="911.0" y="349.0" width="48.8" height="62.0" fill="#2a1e44" /><rect x="911.0" y="349.0" width="10.3" height="62.0" fill="#3a2c5c" /><rect x="949.6" y="349.0" width="10.2" height="62.0" fill="#3a2c5c" /><rect x="911.0" y="355.0" width="10.3" height="1.0" fill="#2a1e40" /><rect x="949.6" y="355.0" width="10.2" height="1.0" fill="#2a1e40" /><rect x="911.0" y="361.5" width="10.3" height="1.0" fill="#2a1e40" /><rect x="949.6" y="361.5" width="10.2" height="1.0" fill="#2a1e40" /><rect x="911.0" y="368.0" width="10.3" height="1.0" fill="#2a1e40" /><rect x="949.6" y="368.0" width="10.2" height="1.0" fill="#2a1e40" /><rect x="911.0" y="374.5" width="10.3" height="1.0" fill="#2a1e40" /><rect x="949.6" y="374.5" width="10.2" height="1.0" fill="#2a1e40" /><rect x="911.0" y="381.0" width="10.3" height="1.0" fill="#2a1e40" /><rect x="949.6" y="381.0" width="10.2" height="1.0" fill="#2a1e40" /><rect x="911.0" y="387.5" width="10.3" height="1.0" fill="#2a1e40" /><rect x="949.6" y="387.5" width="10.2" height="1.0" fill="#2a1e40" /><rect x="911.0" y="394.0" width="10.3" height="1.0" fill="#2a1e40" /><rect x="949.6" y="394.0" width="10.2" height="1.0" fill="#2a1e40" /><rect x="911.0" y="400.5" width="10.3" height="1.0" fill="#2a1e40" /><rect x="949.6" y="400.5" width="10.2" height="1.0" fill="#2a1e40" /><rect x="923.3" y="332.6" width="24.1" height="78.0" fill="#0e0812" /><rect x="926.0" y="345.0" width="18.6" height="42.0" fill="#4a3c5e" /><rect x="926.0" y="351.0" width="18.6" height="1.3" fill="#241830" /><rect x="926.0" y="358.0" width="18.6" height="1.3" fill="#241830" /><rect x="926.0" y="365.0" width="18.6" height="1.3" fill="#241830" /><rect x="926.0" y="372.0" width="18.6" height="1.3" fill="#241830" /><rect x="926.0" y="379.0" width="18.6" height="1.3" fill="#241830" /><rect x="926.0" y="386.0" width="18.6" height="1.3" fill="#241830" /><rect x="932.0" y="345.0" width="1.2" height="42.0" fill="#2e2240" /><rect x="938.4" y="345.0" width="1.2" height="42.0" fill="#2e2240" /><rect x="890.5" y="370.0" width="1.0" height="6.0" fill="#8a8470" /><rect x="895.5" y="370.0" width="1.0" height="6.0" fill="#8a8470" /><rect x="900.5" y="370.0" width="1.0" height="6.0" fill="#8a8470" /><rect x="969.5" y="370.0" width="1.0" height="6.0" fill="#8a8470" /><rect x="974.5" y="370.0" width="1.0" height="6.0" fill="#8a8470" /><rect x="979.5" y="370.0" width="1.0" height="6.0" fill="#8a8470" /><rect x="888.5" y="379.0" width="1.8" height="2.6" fill="#8a78b0" /><rect x="892.9" y="379.0" width="1.8" height="2.6" fill="#9a88c0" /><rect x="897.3" y="379.0" width="1.8" height="2.6" fill="#6a5a98" /><rect x="901.7" y="379.0" width="1.8" height="2.6" fill="#9a88c0" /><rect x="906.1" y="379.0" width="1.8" height="2.6" fill="#8a78b0" /><rect x="888.5" y="385.0" width="1.8" height="2.6" fill="#9a88c0" /><rect x="892.9" y="385.0" width="1.8" height="2.6" fill="#9a88c0" /><rect x="897.3" y="385.0" width="1.8" height="2.6" fill="#8a78b0" /><rect x="901.7" y="385.0" width="1.8" height="2.6" fill="#8a78b0" /><rect x="888.5" y="391.0" width="1.8" height="2.6" fill="#6a5a98" /><rect x="892.9" y="391.0" width="1.8" height="2.6" fill="#6a5a98" /><rect x="897.3" y="391.0" width="1.8" height="2.6" fill="#6a5a98" /><rect x="901.7" y="391.0" width="1.8" height="2.6" fill="#6a5a98" /><rect x="888.5" y="397.0" width="1.8" height="2.6" fill="#9a88c0" /><rect x="892.9" y="397.0" width="1.8" height="2.6" fill="#9a88c0" /><rect x="897.3" y="397.0" width="1.8" height="2.6" fill="#9a88c0" /><rect x="906.1" y="397.0" width="1.8" height="2.6" fill="#5a4a80" /><rect x="888.5" y="403.0" width="1.8" height="2.6" fill="#8a78b0" /><rect x="892.9" y="403.0" width="1.8" height="2.6" fill="#5a4a80" /><rect x="901.7" y="403.0" width="1.8" height="2.6" fill="#5a4a80" /><rect x="906.1" y="403.0" width="1.8" height="2.6" fill="#9a88c0" /><rect x="962.5" y="379.0" width="1.8" height="2.6" fill="#9a88c0" /><rect x="966.9" y="379.0" width="1.8" height="2.6" fill="#5a4a80" /><rect x="971.3" y="379.0" width="1.8" height="2.6" fill="#6a5a98" /><rect x="962.5" y="385.0" width="1.8" height="2.6" fill="#8a78b0" /><rect x="966.9" y="385.0" width="1.8" height="2.6" fill="#5a4a80" /><rect x="980.1" y="385.0" width="1.8" height="2.6" fill="#8a78b0" /><rect x="962.5" y="391.0" width="1.8" height="2.6" fill="#5a4a80" /><rect x="966.9" y="391.0" width="1.8" height="2.6" fill="#6a5a98" /><rect x="971.3" y="391.0" width="1.8" height="2.6" fill="#9a88c0" /><rect x="975.7" y="391.0" width="1.8" height="2.6" fill="#6a5a98" /><rect x="980.1" y="391.0" width="1.8" height="2.6" fill="#8a78b0" /><rect x="962.5" y="397.0" width="1.8" height="2.6" fill="#9a88c0" /><rect x="975.7" y="397.0" width="1.8" height="2.6" fill="#6a5a98" /><rect x="980.1" y="397.0" width="1.8" height="2.6" fill="#5a4a80" /><rect x="962.5" y="403.0" width="1.8" height="2.6" fill="#5a4a80" /><rect x="966.9" y="403.0" width="1.8" height="2.6" fill="#6a5a98" /><rect x="971.3" y="403.0" width="1.8" height="2.6" fill="#6a5a98" /><rect x="975.7" y="403.0" width="1.8" height="2.6" fill="#6a5a98" /><defs><radialGradient id="glow" cx="0.5" cy="0.45" r="0.6"><stop offset="0" stop-color="#a01a50"/><stop offset="1" stop-color="#5a1a4a"/></radialGradient></defs><path transform="translate(935.3,398) scale(1.9)" d="M0,9 L-8,0 C-10,-3 -9,-7 -5,-7.5 C-2.5,-7.5 -1,-6 0,-4 C1,-6 2.5,-7.5 5,-7.5 C9,-7 10,-3 8,0 Z" fill="url(#glow)"/><g fill="#d8c8a0"><circle cx="928" cy="390" r="2"/><rect x="926.5" y="392" width="3" height="6"/><polygon points="925,398 931,398 933,408 923,408"/><line x1="926" y1="394" x2="922" y2="399" stroke="#d8c8a0" stroke-width="1"/><line x1="930" y1="394" x2="935" y2="399" stroke="#d8c8a0" stroke-width="1"/></g><g fill="#b4a48a"><circle cx="942" cy="389.5" r="2"/><rect x="940" y="392" width="4" height="10"/><rect x="940" y="402" width="1.6" height="7"/><rect x="942.4" y="402" width="1.6" height="7"/><line x1="940" y1="394" x2="935" y2="399" stroke="#b4a48a" stroke-width="1"/><line x1="944" y1="394" x2="948" y2="399" stroke="#b4a48a" stroke-width="1"/></g><rect x="853.4" y="405.0" width="28.9" height="25.0" fill="#3a2a5e" /><rect x="855.9" y="407.5" width="4.5" height="3.0" fill="#b06880" opacity="0.85"/><rect x="862.7" y="407.5" width="4.5" height="3.0" fill="#6a5a88" opacity="0.85"/><rect x="869.5" y="407.5" width="4.5" height="3.0" fill="#d0c8a0" opacity="0.85"/><rect x="876.3" y="407.5" width="4.5" height="3.0" fill="#8a6070" opacity="0.85"/><rect x="855.9" y="413.0" width="4.5" height="3.0" fill="#8a6070" opacity="0.85"/><rect x="862.7" y="413.0" width="4.5" height="3.0" fill="#5a4a80" opacity="0.85"/><rect x="869.5" y="413.0" width="4.5" height="3.0" fill="#c8a0a0" opacity="0.85"/><rect x="876.3" y="413.0" width="4.5" height="3.0" fill="#b06880" opacity="0.85"/><rect x="855.9" y="418.5" width="4.5" height="3.0" fill="#b06880" opacity="0.85"/><rect x="862.7" y="418.5" width="4.5" height="3.0" fill="#6a5a88" opacity="0.85"/><rect x="869.5" y="418.5" width="4.5" height="3.0" fill="#d0c8a0" opacity="0.85"/><rect x="876.3" y="418.5" width="4.5" height="3.0" fill="#8a6070" opacity="0.85"/><rect x="855.9" y="424.0" width="4.5" height="3.0" fill="#8a6070" opacity="0.85"/><rect x="862.7" y="424.0" width="4.5" height="3.0" fill="#5a4a80" opacity="0.85"/><rect x="869.5" y="424.0" width="4.5" height="3.0" fill="#c8a0a0" opacity="0.85"/><rect x="876.3" y="424.0" width="4.5" height="3.0" fill="#b06880" opacity="0.85"/><rect x="858.4" y="399.0" width="0.9" height="6.0" fill="#8a8470" /><rect x="863.4" y="399.0" width="0.9" height="6.0" fill="#8a8470" /><rect x="868.4" y="399.0" width="0.9" height="6.0" fill="#8a8470" /><rect x="988.2" y="405.0" width="28.9" height="25.0" fill="#3a2a5e" /><rect x="990.7" y="407.5" width="4.5" height="3.0" fill="#b06880" opacity="0.85"/><rect x="997.5" y="407.5" width="4.5" height="3.0" fill="#6a5a88" opacity="0.85"/><rect x="1004.3" y="407.5" width="4.5" height="3.0" fill="#d0c8a0" opacity="0.85"/><rect x="1011.1" y="407.5" width="4.5" height="3.0" fill="#8a6070" opacity="0.85"/><rect x="990.7" y="413.0" width="4.5" height="3.0" fill="#8a6070" opacity="0.85"/><rect x="997.5" y="413.0" width="4.5" height="3.0" fill="#5a4a80" opacity="0.85"/><rect x="1004.3" y="413.0" width="4.5" height="3.0" fill="#c8a0a0" opacity="0.85"/><rect x="1011.1" y="413.0" width="4.5" height="3.0" fill="#b06880" opacity="0.85"/><rect x="990.7" y="418.5" width="4.5" height="3.0" fill="#b06880" opacity="0.85"/><rect x="997.5" y="418.5" width="4.5" height="3.0" fill="#6a5a88" opacity="0.85"/><rect x="1004.3" y="418.5" width="4.5" height="3.0" fill="#d0c8a0" opacity="0.85"/><rect x="1011.1" y="418.5" width="4.5" height="3.0" fill="#8a6070" opacity="0.85"/><rect x="990.7" y="424.0" width="4.5" height="3.0" fill="#8a6070" opacity="0.85"/><rect x="997.5" y="424.0" width="4.5" height="3.0" fill="#5a4a80" opacity="0.85"/><rect x="1004.3" y="424.0" width="4.5" height="3.0" fill="#c8a0a0" opacity="0.85"/><rect x="1011.1" y="424.0" width="4.5" height="3.0" fill="#b06880" opacity="0.85"/><rect x="993.2" y="399.0" width="0.9" height="6.0" fill="#8a8470" /><rect x="998.2" y="399.0" width="0.9" height="6.0" fill="#8a8470" /><rect x="1003.2" y="399.0" width="0.9" height="6.0" fill="#8a8470" /><rect x="882.3" y="410.0" width="105.9" height="20.0" fill="#4a4a3a" /><rect x="883.0" y="410.0" width="2.0" height="20.0" fill="#5a2a3a" /><rect x="888.3" y="410.0" width="2.0" height="20.0" fill="#6a7050" /><rect x="893.6" y="410.0" width="2.0" height="20.0" fill="#5a2a3a" /><rect x="898.9" y="410.0" width="2.0" height="20.0" fill="#6a7050" /><rect x="904.2" y="410.0" width="2.0" height="20.0" fill="#5a2a3a" /><rect x="909.5" y="410.0" width="2.0" height="20.0" fill="#6a7050" /><rect x="914.8" y="410.0" width="2.0" height="20.0" fill="#5a2a3a" /><rect x="920.1" y="410.0" width="2.0" height="20.0" fill="#6a7050" /><rect x="925.4" y="410.0" width="2.0" height="20.0" fill="#5a2a3a" /><rect x="930.7" y="410.0" width="2.0" height="20.0" fill="#6a7050" /><rect x="936.0" y="410.0" width="2.0" height="20.0" fill="#5a2a3a" /><rect x="941.3" y="410.0" width="2.0" height="20.0" fill="#6a7050" /><rect x="946.6" y="410.0" width="2.0" height="20.0" fill="#5a2a3a" /><rect x="951.9" y="410.0" width="2.0" height="20.0" fill="#6a7050" /><rect x="957.2" y="410.0" width="2.0" height="20.0" fill="#5a2a3a" /><rect x="962.5" y="410.0" width="2.0" height="20.0" fill="#6a7050" /><rect x="967.8" y="410.0" width="2.0" height="20.0" fill="#5a2a3a" /><rect x="973.1" y="410.0" width="2.0" height="20.0" fill="#6a7050" /><rect x="978.4" y="410.0" width="2.0" height="20.0" fill="#5a2a3a" /><rect x="983.7" y="410.0" width="2.0" height="20.0" fill="#6a7050" /><polygon points="902.3,412.6 967.6,412.6 967.6,423.0 935.0,423.0 902.3,423.0" fill="#a01e70" /><rect x="902.3" y="419.0" width="65.3" height="4.0" fill="#7a1050" /><rect x="887.8" y="430.0" width="94.2" height="4.0" fill="#2a2a28" /><polygon points="887.8,432.0 982.0,432.0 982.0,466.0 975.3,462.0 968.5,466.0 961.8,462.0 955.1,466.0 948.4,462.0 941.6,466.0 934.9,462.0 928.2,466.0 921.4,462.0 914.7,466.0 908.0,462.0 901.3,466.0 894.5,462.0 887.8,466.0" fill="#181014" /><rect x="891.0" y="440.0" width="5.0" height="22.0" fill="#5a1a2a" /><rect x="899.0" y="440.0" width="5.0" height="22.0" fill="#3e4432" /><rect x="907.0" y="440.0" width="5.0" height="22.0" fill="#5a1a2a" /><rect x="915.0" y="440.0" width="5.0" height="22.0" fill="#3e4432" /><rect x="949.0" y="440.0" width="5.0" height="22.0" fill="#3e4432" /><rect x="957.0" y="440.0" width="5.0" height="22.0" fill="#5a1a2a" /><rect x="965.0" y="440.0" width="5.0" height="22.0" fill="#3e4432" /><rect x="973.0" y="440.0" width="5.0" height="22.0" fill="#5a1a2a" /><polygon points="889.0,438.0 892.0,432.5 895.0,438.0" fill="#5a5a48" /><polygon points="896.3,438.0 899.3,432.5 902.3,438.0" fill="#5a5a48" /><polygon points="903.6,438.0 906.6,432.5 909.6,438.0" fill="#5a5a48" /><polygon points="910.9,438.0 913.9,432.5 916.9,438.0" fill="#5a5a48" /><polygon points="918.2,438.0 921.2,432.5 924.2,438.0" fill="#5a5a48" /><polygon points="925.5,438.0 928.5,432.5 931.5,438.0" fill="#5a5a48" /><polygon points="932.8,438.0 935.8,432.5 938.8,438.0" fill="#5a5a48" /><polygon points="940.1,438.0 943.1,432.5 946.1,438.0" fill="#5a5a48" /><polygon points="947.4,438.0 950.4,432.5 953.4,438.0" fill="#5a5a48" /><polygon points="954.7,438.0 957.7,432.5 960.7,438.0" fill="#5a5a48" /><polygon points="962.0,438.0 965.0,432.5 968.0,438.0" fill="#5a5a48" /><polygon points="969.3,438.0 972.3,432.5 975.3,438.0" fill="#5a5a48" /><polygon points="976.6,438.0 979.6,432.5 982.6,438.0" fill="#5a5a48" /><rect x="927.7" y="438.0" width="15.1" height="17.0" fill="#181014" /><rect x="929.0" y="440.0" width="12.5" height="1.4" fill="#5a5a50" /><rect x="929.0" y="444.0" width="12.5" height="1.4" fill="#5a5a50" /><rect x="929.0" y="448.0" width="12.5" height="1.4" fill="#5a5a50" /><rect x="929.0" y="452.0" width="12.5" height="1.4" fill="#5a5a50" /><rect x="906.5" y="540.0" width="57.5" height="11.0" fill="#33225f" /><rect x="910.0" y="540.0" width="5.0" height="11.0" fill="#6f6d58" /><rect x="920.0" y="540.0" width="5.0" height="11.0" fill="#77765c" /><rect x="945.0" y="540.0" width="5.0" height="11.0" fill="#77765c" /><rect x="955.0" y="540.0" width="5.0" height="11.0" fill="#6f6d58" /><polygon points="894.0,550.7 974.1,550.7 985.4,563.1 985.4,575.6 974.1,589.9 972.3,589.9 972.3,624.0 898.1,624.0 898.1,589.9 895.8,589.9 883.9,575.6 883.9,563.1" fill="#33225f" /><path d="M883.5,592 h6 v3.5 h-2.5 v4 h10 v5 h-13.5 Z" fill="#33225f"/><path d="M987.0999999999999,592 h-6 v3.5 h2.5 v4 h-10 v5 h13.5 Z" fill="#33225f"/><rect x="908.2" y="563.7" width="52.8" height="34.0" fill="#6e1238" /><rect x="908.2" y="580.0" width="52.8" height="18.0" fill="#5a0e30" /><rect x="908.2" y="598.0" width="52.8" height="16.8" fill="#2a0818" /><polygon points="918.3,572.0 930.0,572.0 935.0,576.0 940.0,572.0 951.0,572.0 951.0,587.5 935.0,600.5 918.3,587.5" fill="#a82a80" /><path transform="translate(935.2,584) scale(1.0)" d="M0,9.5 L-8.5,-1.5 L-4,-8.5 L0,-4 L4,-8.5 L8.5,-1.5 Z" fill="#e8502e"/><rect x="900.0" y="556.5" width="3.6" height="3.0" fill="#1a1020" /><rect x="906.2" y="556.5" width="3.6" height="3.0" fill="#d88a8a" /><rect x="912.4" y="556.5" width="3.6" height="3.0" fill="#5a5070" /><rect x="918.6" y="556.5" width="3.6" height="3.0" fill="#d8d0a0" /><rect x="924.8" y="556.5" width="3.6" height="3.0" fill="#1a1020" /><rect x="931.0" y="556.5" width="3.6" height="3.0" fill="#d88a8a" /><rect x="937.2" y="556.5" width="3.6" height="3.0" fill="#5a5070" /><rect x="943.4" y="556.5" width="3.6" height="3.0" fill="#d8d0a0" /><rect x="949.6" y="556.5" width="3.6" height="3.0" fill="#1a1020" /><rect x="955.8" y="556.5" width="3.6" height="3.0" fill="#d88a8a" /><rect x="962.0" y="556.5" width="3.6" height="3.0" fill="#5a5070" /><rect x="968.2" y="556.5" width="3.6" height="3.0" fill="#d8d0a0" /><rect x="895.0" y="561.0" width="3.6" height="3.0" fill="#5a5070" /><rect x="900.0" y="561.0" width="3.6" height="3.0" fill="#5a5070" /><rect x="900.0" y="566.0" width="3.6" height="3.0" fill="#d8d0a0" /><rect x="895.0" y="571.0" width="3.6" height="3.0" fill="#1a1020" /><rect x="965.0" y="566.0" width="3.6" height="3.0" fill="#5a5070" /><rect x="966.0" y="572.0" width="3.6" height="3.0" fill="#d88a8a" /><rect x="971.0" y="571.0" width="3.6" height="3.0" fill="#5a5070" />
<rect x="664.0" y="624.0" width="537.0" height="4.0" fill="#1a0612" /><rect x="664.0" y="628.0" width="537.0" height="2.6" fill="#3e1428" /><rect x="664.0" y="630.5" width="80.0" height="26.0" fill="#4a4b38" /><rect x="744.0" y="630.5" width="75.0" height="26.0" fill="#3e4050" /><rect x="819.0" y="630.5" width="78.5" height="26.0" fill="#4a4b38" /><rect x="897.5" y="630.5" width="76.0" height="26.0" fill="#6a7a3a" /><rect x="973.5" y="630.5" width="79.5" height="26.0" fill="#4a4b38" /><rect x="1053.0" y="630.5" width="75.0" height="26.0" fill="#3e4050" /><rect x="1128.0" y="630.5" width="73.0" height="26.0" fill="#4a4b38" />
<g fill="none" stroke="#b8b090" stroke-width="1"><line x1="1163.5" y1="605" x2="1163.5" y2="618"/><line x1="1163.5" y1="612" x2="1169" y2="618"/><line x1="1163.5" y1="612" x2="1168" y2="607"/><circle cx="1167" cy="606" r="0.9"/><line x1="1161" y1="620" x2="1175" y2="620"/></g>
</g>
</svg>
<svg id="prog" class="abs" viewBox="6 794 1250 6" style="top:794px;height:6px">
  <rect x="6" y="794" width="1250" height="6" fill="#f0eff4"/>
  <rect x="6" y="795" width="632" height="3.6" fill="#7db2ea"/>
  <rect x="638" y="795" width="618" height="4" fill="#e8e8ee"/>
  <rect x="130.5" y="794" width="1.6" height="5" fill="#dff0ff"/>
  <rect x="257.5" y="794" width="1.6" height="5" fill="#dff0ff"/>
  <rect x="384.5" y="794" width="1.6" height="5" fill="#dff0ff"/>
  <rect x="511.5" y="794" width="1.6" height="5" fill="#dff0ff"/>
  <rect x="6" y="799" width="1250" height="1" fill="#2c2e3a"/>
</svg>
</body></html>
